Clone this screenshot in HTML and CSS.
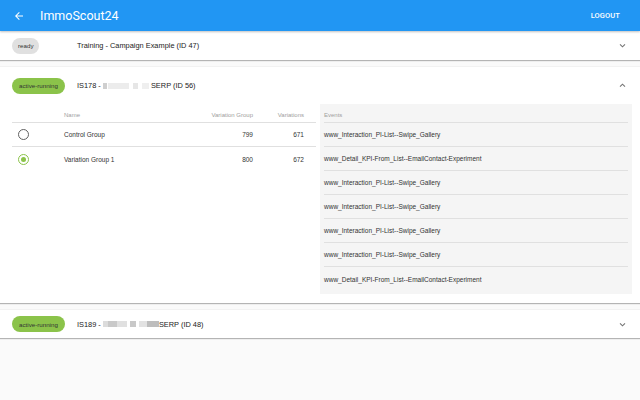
FILE: index.html
```html
<!DOCTYPE html>
<html>
<head>
<meta charset="utf-8">
<link rel="stylesheet" href="styles.css">
</head>
<body>
<header class="appbar">
  <svg class="back" width="12" height="12" viewBox="0 0 24 24"><path d="M20 11H7.83l5.59-5.59L12 4l-8 8 8 8 1.41-1.41L7.83 13H20v-2z" fill="#fff"/></svg>
  <span class="brand">ImmoScout24</span>
  <span class="spacer"></span>
  <span class="logout">LOGOUT</span>
</header>
<main class="panels">
  <section class="panel">
    <div class="summary s1">
      <span class="chipcol"><span class="chip ready">ready</span></span>
      <span class="ptitle">Training - Campaign Example (ID 47)</span>
      <svg class="chev" width="7" height="7" viewBox="0 0 7 7"><path d="M1 2.3 3.5 4.8 6 2.3" fill="none" stroke="#757575" stroke-width="1.1"/></svg>
    </div>
  </section>
  <section class="panel expanded">
    <div class="summary s2">
      <span class="chipcol"><span class="chip active">active-running</span></span>
      <span class="ptitle">IS178 - <span class="blur b1"></span><span class="blur b2"></span> SERP (ID 56)</span>
      <svg class="chev" width="7" height="7" viewBox="0 0 7 7"><path d="M1 4.7 3.5 2.2 6 4.7" fill="none" stroke="#757575" stroke-width="1.1"/></svg>
    </div>
    <div class="details">
      <div class="groups">
        <div class="grow ghead">
          <span class="c-radio"></span>
          <span class="c-name">Name</span>
          <span class="c-num">Variation Group</span>
          <span class="c-num2">Variations</span>
        </div>
        <div class="grow">
          <span class="c-radio"><span class="radio"></span></span>
          <span class="c-name">Control Group</span>
          <span class="c-num">799</span>
          <span class="c-num2">671</span>
        </div>
        <div class="grow last">
          <span class="c-radio"><span class="radio on"></span></span>
          <span class="c-name">Variation Group 1</span>
          <span class="c-num">800</span>
          <span class="c-num2">672</span>
        </div>
      </div>
      <div class="events">
        <div class="erow ehead">Events</div>
        <div class="erow">www_Interaction_PI-List--Swipe_Gallery</div>
        <div class="erow">www_Detail_KPI-From_List--EmailContact-Experiment</div>
        <div class="erow">www_Interaction_PI-List--Swipe_Gallery</div>
        <div class="erow">www_Interaction_PI-List--Swipe_Gallery</div>
        <div class="erow">www_Interaction_PI-List--Swipe_Gallery</div>
        <div class="erow">www_Interaction_PI-List--Swipe_Gallery</div>
        <div class="erow last">www_Detail_KPI-From_List--EmailContact-Experiment</div>
      </div>
    </div>
  </section>
  <section class="panel spaced">
    <div class="summary s3">
      <span class="chipcol"><span class="chip active">active-running</span></span>
      <span class="ptitle">IS189 - <span class="blur b3"></span><span class="blur b4"></span><span class="blur b5"></span>SERP (ID 48)</span>
      <svg class="chev" width="7" height="7" viewBox="0 0 7 7"><path d="M1 2.3 3.5 4.8 6 2.3" fill="none" stroke="#757575" stroke-width="1.1"/></svg>
    </div>
  </section>
</main>
</body>
</html>
```
FILE: styles.css
```css
* { box-sizing: border-box; }
html, body { margin: 0; padding: 0; }
body {
  background: #fafafa;
  font-family: "Liberation Sans", Arial, Helvetica, sans-serif;
  color: #333;
  width: 640px;
  height: 400px;
  overflow: hidden;
}
.appbar {
  height: 31px;
  background: #2196f3;
  display: flex;
  align-items: center;
  padding: 0 20px 0 12px;
  color: #fff;
  font-family: Roboto, "Liberation Sans", sans-serif;
  box-shadow: 0 1px 2px rgba(0,0,0,.25);
  position: relative;
  z-index: 2;
}
.back { margin-left: 1px; }
.brand { margin-left: 15px; font-size: 12.5px; }
.spacer { flex: 1; }
.logout { font-size: 7.5px; font-weight: 500; letter-spacing: 0.1px; }

.panel {
  background: #fff;
  box-shadow: 0 1px 1px rgba(0,0,0,.28);
}
.panel.expanded, .panel.spaced {
  margin-top: 6px;
  border-top: 1px solid #f2f2f2;
}
.summary {
  display: flex;
  align-items: center;
  padding: 0 14px 0 12px;
}
.s1 { height: 29px; }
.s2 { height: 37px; }
.s3 { height: 28px; }
.chipcol { width: 65px; flex: none; display: flex; }
.chip {
  display: inline-flex;
  align-items: center;
  height: 16px;
  border-radius: 8px;
  padding: 0 7px;
  font-size: 6.2px;
  color: #333;
}
.chip.ready { background: #e0e0e0; padding: 0 6px; }
.chip.active { background: #8bc34a; }
.ptitle { flex: 1; color: #222; font-size: 7.4px; display: flex; align-items: center; white-space: pre; }
.blur { display: inline-block; height: 6px; background: #e4e4e4; filter: blur(0.6px); }
.b1 { width: 4px; background: #cfcfcf; }
.b2 { width: 41px; margin-left: 1px; background: linear-gradient(90deg,#ececec 0 50%, #fff 50% 60%, #e6e6e6 60% 72%, #fff 72% 82%, #efefef 82%); }
.b3 { width: 24px; background: linear-gradient(90deg,#dcdcdc 0 20%, #c9c9c9 20% 60%, #e0e0e0 60%); }
.b4 { width: 6px; margin-left: 3px; background: #c8c8c8; }
.b5 { width: 20px; margin-left: 3px; background: linear-gradient(90deg,#e2e2e2 0 40%, #bdbdbd 40%); }
.chev { flex: none; }

.details {
  display: flex;
  gap: 4px;
  padding: 0 8px 9px 12px;
}
.groups { width: 304px; flex: none; }
.grow {
  display: flex;
  align-items: center;
  height: 24px;
  border-bottom: 1px solid #e0e0e0;
  font-size: 6.5px;
  color: #333;
}
.grow.last { border-bottom: none; }
.grow.ghead { height: 19px; padding-top: 3px; font-size: 6px; color: #9e9e9e; }
.c-radio { width: 52px; display: flex; padding-left: 6px; }
.c-name { flex: 1; }
.c-num { width: 100px; text-align: right; }
.c-num2 { width: 63px; text-align: right; padding-right: 12px; }
.radio {
  width: 11px; height: 11px;
  border: 1.2px solid #616161;
  border-radius: 50%;
  display: flex; align-items: center; justify-content: center;
}
.radio.on { border-color: #8bc34a; }
.radio.on::after { content: ""; width: 5px; height: 5px; border-radius: 50%; background: #8bc34a; }

.events {
  width: 312px;
  flex: none;
  background: #f5f5f5;
  padding: 0 4px 3px 4px;
}
.erow {
  height: 24px;
  display: flex;
  align-items: center;
  border-bottom: 1px solid #e0e0e0;
  font-size: 6.5px;
  color: #333;
}
.erow.last { border-bottom: none; }
.erow.ehead { height: 19px; padding-top: 3px; font-size: 6px; color: #9e9e9e; }
```
